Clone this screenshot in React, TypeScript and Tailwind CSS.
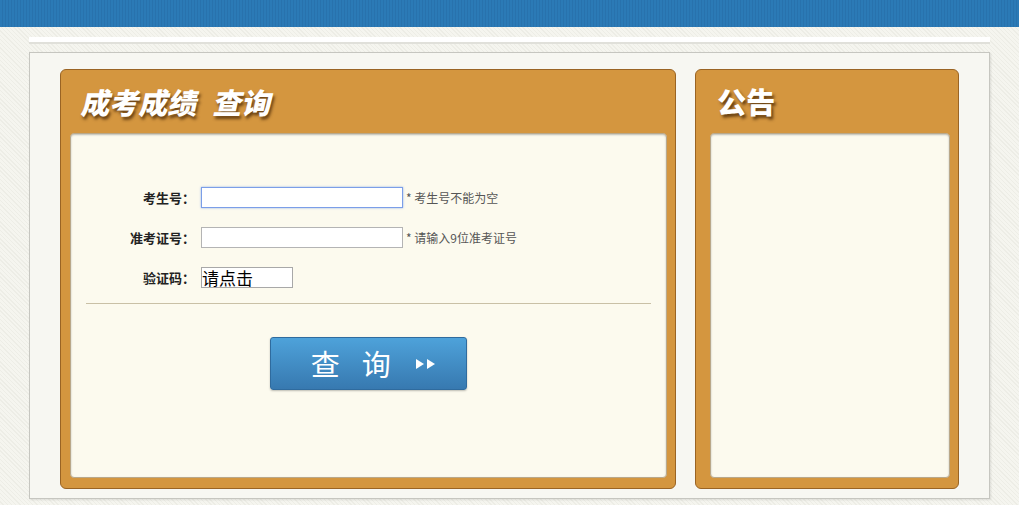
const cjk = { fontFamily: '"Noto Sans CJK SC", "Noto Sans", sans-serif' };

function Panel({
  title,
  italic,
  className,
  innerClass,
  children,
}: {
  title: React.ReactNode;
  italic?: boolean;
  className: string;
  innerClass: string;
  children?: React.ReactNode;
}) {
  return (
    <div
      className={`flex flex-col rounded-[6px] border border-[#9a6424] bg-[#d4963f] ${className}`}
    >
      <div className="flex h-[63px] items-center">
        <h2
          className={`text-[29px] font-black leading-none text-white [text-shadow:2px_3px_3px_rgba(60,30,0,0.7)] ${italic ? "pl-[22px]" : "pl-[21px]"}`}
          style={cjk}
        >
          {title}
        </h2>
      </div>
      <div
        className={`mb-[10px] flex-1 rounded-[4px] border border-[#b9a88a] bg-[#fcfaee] shadow-[inset_0_1px_2px_rgba(0,0,0,0.25)] ${innerClass}`}
      >
        {children}
      </div>
    </div>
  );
}

function Row({ label, children }: { label: string; children: React.ReactNode }) {
  return (
    <div className="flex h-[21px] items-center">
      <div className="w-[124px] text-right text-[13px] font-bold text-[#222]" style={cjk}>
        {label}：
      </div>
      <div className="ml-[6px] flex items-center">{children}</div>
    </div>
  );
}

export default function App() {
  return (
    <div className="min-h-[505px] w-full bg-[#f2f2ec] bg-[repeating-linear-gradient(45deg,#f5f5ef_0px,#f5f5ef_2px,#ededE6_2px,#ededE6_3px)]">
      {/* top bar */}
      <div className="h-[27px] w-full bg-[#2a78b4] bg-[repeating-linear-gradient(90deg,#2b7ab6_0px,#2b7ab6_2px,#2872ad_2px,#2872ad_3px)]" />

      <div className="mx-auto w-[961px] pt-[10px]">
        <div className="h-[7px] border-b-[2px] border-[#e0e0da] bg-white" />

        <div className="mt-[8px] flex h-[447px] gap-[19px] border border-[#c6c6c0] bg-[#f7f7f2] px-[30px] pb-[9px] pt-[16px] shadow-[1px_1px_2px_rgba(0,0,0,0.1)]">
          <Panel
            title={
              <span className="inline-flex -skew-x-12 gap-[16px]">
                <span>成考成绩</span>
                <span>查询</span>
              </span>
            }
            italic
            className="w-[617px]"
            innerClass="ml-[9px] mr-[8px]"
          >
            <div className="flex flex-col gap-[19px] pt-[53px]" style={cjk}>
              <Row label="考生号">
                <input
                  className="h-[21px] w-[202px] border border-[#7b9ee8] bg-white outline-none shadow-[0_0_2px_rgba(80,130,230,0.6)]"
                  type="text"
                />
                <span className="ml-[3px] text-[12px] text-[#555]">* 考生号不能为空</span>
              </Row>
              <Row label="准考证号">
                <input
                  className="h-[21px] w-[202px] border border-[#b4b4b4] bg-white outline-none"
                  type="text"
                />
                <span className="ml-[3px] text-[12px] text-[#555]">* 请输入9位准考证号</span>
              </Row>
              <Row label="验证码">
                <div className="flex h-[21px] w-[92px] items-center border border-[#a8a8a8] bg-white text-[17px] leading-none text-black">
                  请点击
                </div>
              </Row>
            </div>
            <div className="mx-[15px] mt-[15px] h-px bg-[#c9c0a6]" />
            <div className="mt-[33px] flex justify-center">
              <button
                className="flex h-[53px] w-[197px] items-center justify-center rounded-[3px] border border-[#2f6b9e] bg-gradient-to-b from-[#4ea2da] to-[#3779b0] text-white shadow-[0_1px_2px_rgba(0,0,0,0.25)]"
                style={cjk}
              >
                <span className="ml-[10px] text-[29px] font-normal leading-none tracking-[22px]">查询</span>
                <svg width="22" height="12" viewBox="0 0 22 12" className="ml-[2px]">
                  <path d="M1 1 L9 6 L1 11 Z" fill="white" />
                  <path d="M12 1 L20 6 L12 11 Z" fill="white" />
                </svg>
              </button>
            </div>
          </Panel>

          <Panel title="公告" className="w-[264px]" innerClass="ml-[14px] mr-[8px]" />
        </div>
      </div>
    </div>
  );
}
